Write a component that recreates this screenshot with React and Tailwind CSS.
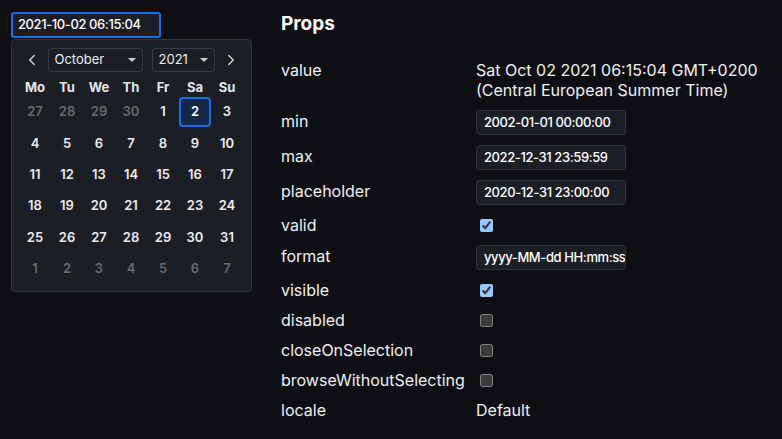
import React from 'react';
import { ChevronLeft, ChevronRight } from 'lucide-react';

const weekDays = ['Mo', 'Tu', 'We', 'Th', 'Fr', 'Sa', 'Su'];

const days = [
  [27, true], [28, true], [29, true], [30, true], [1], [2], [3],
  [4], [5], [6], [7], [8], [9], [10],
  [11], [12], [13], [14], [15], [16], [17],
  [18], [19], [20], [21], [22], [23], [24],
  [25], [26], [27], [28], [29], [30], [31],
  [1, true], [2, true], [3, true], [4, true], [5, true], [6, true], [7, true],
];

function Caret() {
  return (
    <span className="w-0 h-0 border-l-[4px] border-r-[4px] border-t-[4px] border-l-transparent border-r-transparent border-t-[#c9cad0]" />
  );
}

function SelectBox({ label, width }) {
  return (
    <div
      className={`flex items-center justify-between h-[24px] pl-[6px] pr-[6px] border border-[#373a43] rounded-[3px] text-[13px] text-[#eeeef0] ${width}`}
    >
      <span>{label}</span>
      <Caret />
    </div>
  );
}

function Calendar() {
  return (
    <div className="w-[241px] mt-[1px] bg-[#1c1e26] border border-[#30333c] rounded-[4px] pt-[8px] pb-[7px]">
      <div className="flex items-center h-[24px] px-[8px]">
        <button className="w-[24px] flex justify-center text-[#d0d1d6]">
          <ChevronLeft size={18} strokeWidth={2} />
        </button>
        <div className="ml-[4px]">
          <SelectBox label="October" width="w-[95px]" />
        </div>
        <div className="ml-[9px]">
          <SelectBox label="2021" width="w-[63px]" />
        </div>
        <button className="ml-[5px] w-[24px] flex justify-center text-[#d0d1d6]">
          <ChevronRight size={18} strokeWidth={2} />
        </button>
      </div>
      <div className="px-[7px] mt-[6px]">
        <div className="grid grid-cols-[repeat(7,32px)] h-[19px] items-center">
          {weekDays.map((d) => (
            <div key={d} className="text-center text-[13px] font-bold text-[#e6e6ea]">
              {d}
            </div>
          ))}
        </div>
        <div className="grid grid-cols-[repeat(7,32px)] auto-rows-[30px] gap-y-[1.4px]">
          {days.map(([n, muted], i) => {
            const selected = i === 5;
            return (
              <div
                key={i}
                className={
                  selected
                    ? 'flex items-center justify-center text-[13px] font-semibold text-white bg-[#142849] border-2 border-[#1a6fe6] rounded-[4px]'
                    : `flex items-center justify-center text-[13px] font-semibold ${muted ? 'text-[#676a72]' : 'text-[#ececef]'}`
                }
              >
                {n}
              </div>
            );
          })}
        </div>
      </div>
    </div>
  );
}

function TextInput({ value }) {
  return (
    <div className="w-[150px] h-[25px] flex items-center pl-[7px] bg-[#1c1e26] border border-[#30333c] rounded-[3px] text-[13px] tracking-[-0.4px] font-medium text-white overflow-hidden whitespace-nowrap">
      {value}
    </div>
  );
}

function Check({ checked }) {
  return (
    <input
      type="checkbox"
      checked={checked}
      readOnly
      className="ml-[4px] w-[13px] h-[13px] [color-scheme:dark]"
    />
  );
}

function Row({ label, children }) {
  return (
    <div className="flex items-center py-[5px]">
      <div className="w-[195px] shrink-0 text-[16px] leading-[20px]">{label}</div>
      <div className="text-[16px] leading-[20px] min-h-[20px] flex items-center">{children}</div>
    </div>
  );
}

function InputRow({ label, value }) {
  return (
    <div className="flex items-baseline py-[5px] h-[35px]">
      <div className="w-[195px] shrink-0 text-[16px] leading-[20px]">{label}</div>
      <TextInput value={value} />
    </div>
  );
}

export default function App() {
  return (
    <div
      className="min-h-[439px] w-full bg-[#0e0f13] text-[#f0f0f2] flex"
      style={{ fontFamily: 'Inter, "Noto Sans", sans-serif' }}
    >
      <div className="w-[281px] shrink-0 pl-[11px] pt-[12px]">
        <div className="w-[150px] h-[26px] flex items-center pl-[5px] bg-[#1c1e26] border-2 border-[#1b6fe4] rounded-[3px] text-[13px] tracking-[-0.4px] font-medium text-white">
          2021-10-02 06:15:04
        </div>
        <Calendar />
      </div>
      <div className="flex-1">
        <h2 className="mt-[10px] h-[28px] leading-[28px] text-[19px] font-bold text-white">Props</h2>
        <div className="mt-[17px]">
          <div className="flex py-[5px]">
            <div className="w-[195px] shrink-0 text-[16px] leading-[20px]">value</div>
            <div className="text-[16px] leading-[20px]">
              <div>Sat Oct 02 2021 06:15:04 GMT+0200</div>
              <div>(Central European Summer Time)</div>
            </div>
          </div>
          <InputRow label="min" value="2002-01-01 00:00:00" />
          <InputRow label="max" value="2022-12-31 23:59:59" />
          <InputRow label="placeholder" value="2020-12-31 23:00:00" />
          <Row label="valid">
            <Check checked />
          </Row>
          <InputRow label="format" value="yyyy-MM-dd HH:mm:ss" />
          <Row label="visible">
            <Check checked />
          </Row>
          <Row label="disabled">
            <Check />
          </Row>
          <Row label="closeOnSelection">
            <Check />
          </Row>
          <Row label="browseWithoutSelecting">
            <Check />
          </Row>
          <Row label="locale">Default</Row>
        </div>
      </div>
    </div>
  );
}
